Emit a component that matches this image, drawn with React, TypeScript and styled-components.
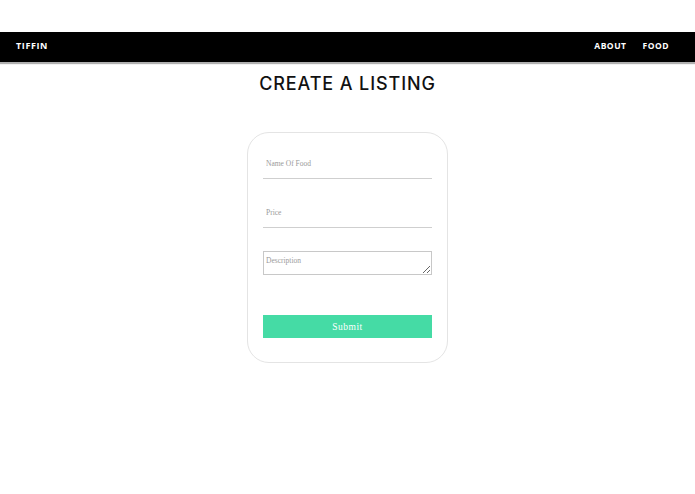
import React, { FC, ReactElement } from 'react';
import styled, { createGlobalStyle } from 'styled-components';

const GlobalStyle = createGlobalStyle`
  html, body {
    margin: 0;
    padding: 0;
    background: #fff;
  }
  body {
    font-family: 'Liberation Serif', serif;
  }
`;

const Page = styled.div`
  padding-top: 32px;
`;

const NavBar = styled.nav`
  height: 30px;
  box-sizing: border-box;
  background: #000;
  display: flex;
  align-items: center;
  justify-content: space-between;
  padding: 0 26px 3px 16px;
  box-shadow: 0 2px 1px #b0b0b0;
`;

const Brand = styled.span`
  color: #fff;
  font-family: 'Open Sans', sans-serif;
  font-weight: 700;
  font-size: 9px;
  letter-spacing: 0.6px;
`;

const NavLinks = styled.div`
  display: flex;
  gap: 16px;
`;

const NavLink = styled.a`
  color: #fff;
  font-family: 'Open Sans', sans-serif;
  font-weight: 700;
  font-size: 8.5px;
  letter-spacing: 0.5px;
  text-decoration: none;
`;

const Title = styled.h1`
  margin: 10px 0 0;
  text-align: center;
  font-family: 'Inter', 'Open Sans', sans-serif;
  font-weight: 500;
  font-size: 18px;
  letter-spacing: 0.9px;
  color: #111;
  line-height: 24px;
`;

const Card = styled.form`
  width: 201px;
  box-sizing: border-box;
  margin: 36px auto 0;
  border: 1px solid #e4e4e4;
  border-radius: 22px;
  padding: 25px 15px 24px;
  display: flex;
  flex-direction: column;
`;

const LineInput = styled.input<{ $gap?: number }>`
  height: 21px;
  box-sizing: border-box;
  border: none;
  border-bottom: 1px solid #cfcfcf;
  outline: none;
  padding: 0 3px 9px;
  font-family: 'Liberation Serif', serif;
  font-size: 7.5px;
  margin-bottom: ${(p) => p.$gap ?? 0}px;
  &::placeholder {
    color: #9a9a9a;
  }
`;

const TextArea = styled.textarea`
  height: 24px;
  box-sizing: border-box;
  border: 1px solid #c8c8c8;
  padding: 4px 2px;
  font-family: 'Liberation Serif', serif;
  font-size: 7.5px;
  resize: vertical;
  outline: none;
  margin-bottom: 40px;
  &::placeholder {
    color: #9a9a9a;
  }
`;

const SubmitButton = styled.button`
  height: 23px;
  border: none;
  background: #45dba5;
  color: #fff;
  font-family: 'Liberation Serif', serif;
  font-size: 9.5px;
  letter-spacing: 0.5px;
  cursor: pointer;
`;

const App: FC = (): ReactElement => (
  <Page>
    <GlobalStyle />
    <NavBar>
      <Brand>TIFFIN</Brand>
      <NavLinks>
        <NavLink href="#">ABOUT</NavLink>
        <NavLink href="#">FOOD</NavLink>
      </NavLinks>
    </NavBar>
    <Title>CREATE A LISTING</Title>
    <Card onSubmit={(e) => e.preventDefault()}>
      <LineInput placeholder="Name Of Food" $gap={28} />
      <LineInput placeholder="Price" $gap={23} />
      <TextArea placeholder="Description" />
      <SubmitButton type="submit">Submit</SubmitButton>
    </Card>
  </Page>
);

export default App;
